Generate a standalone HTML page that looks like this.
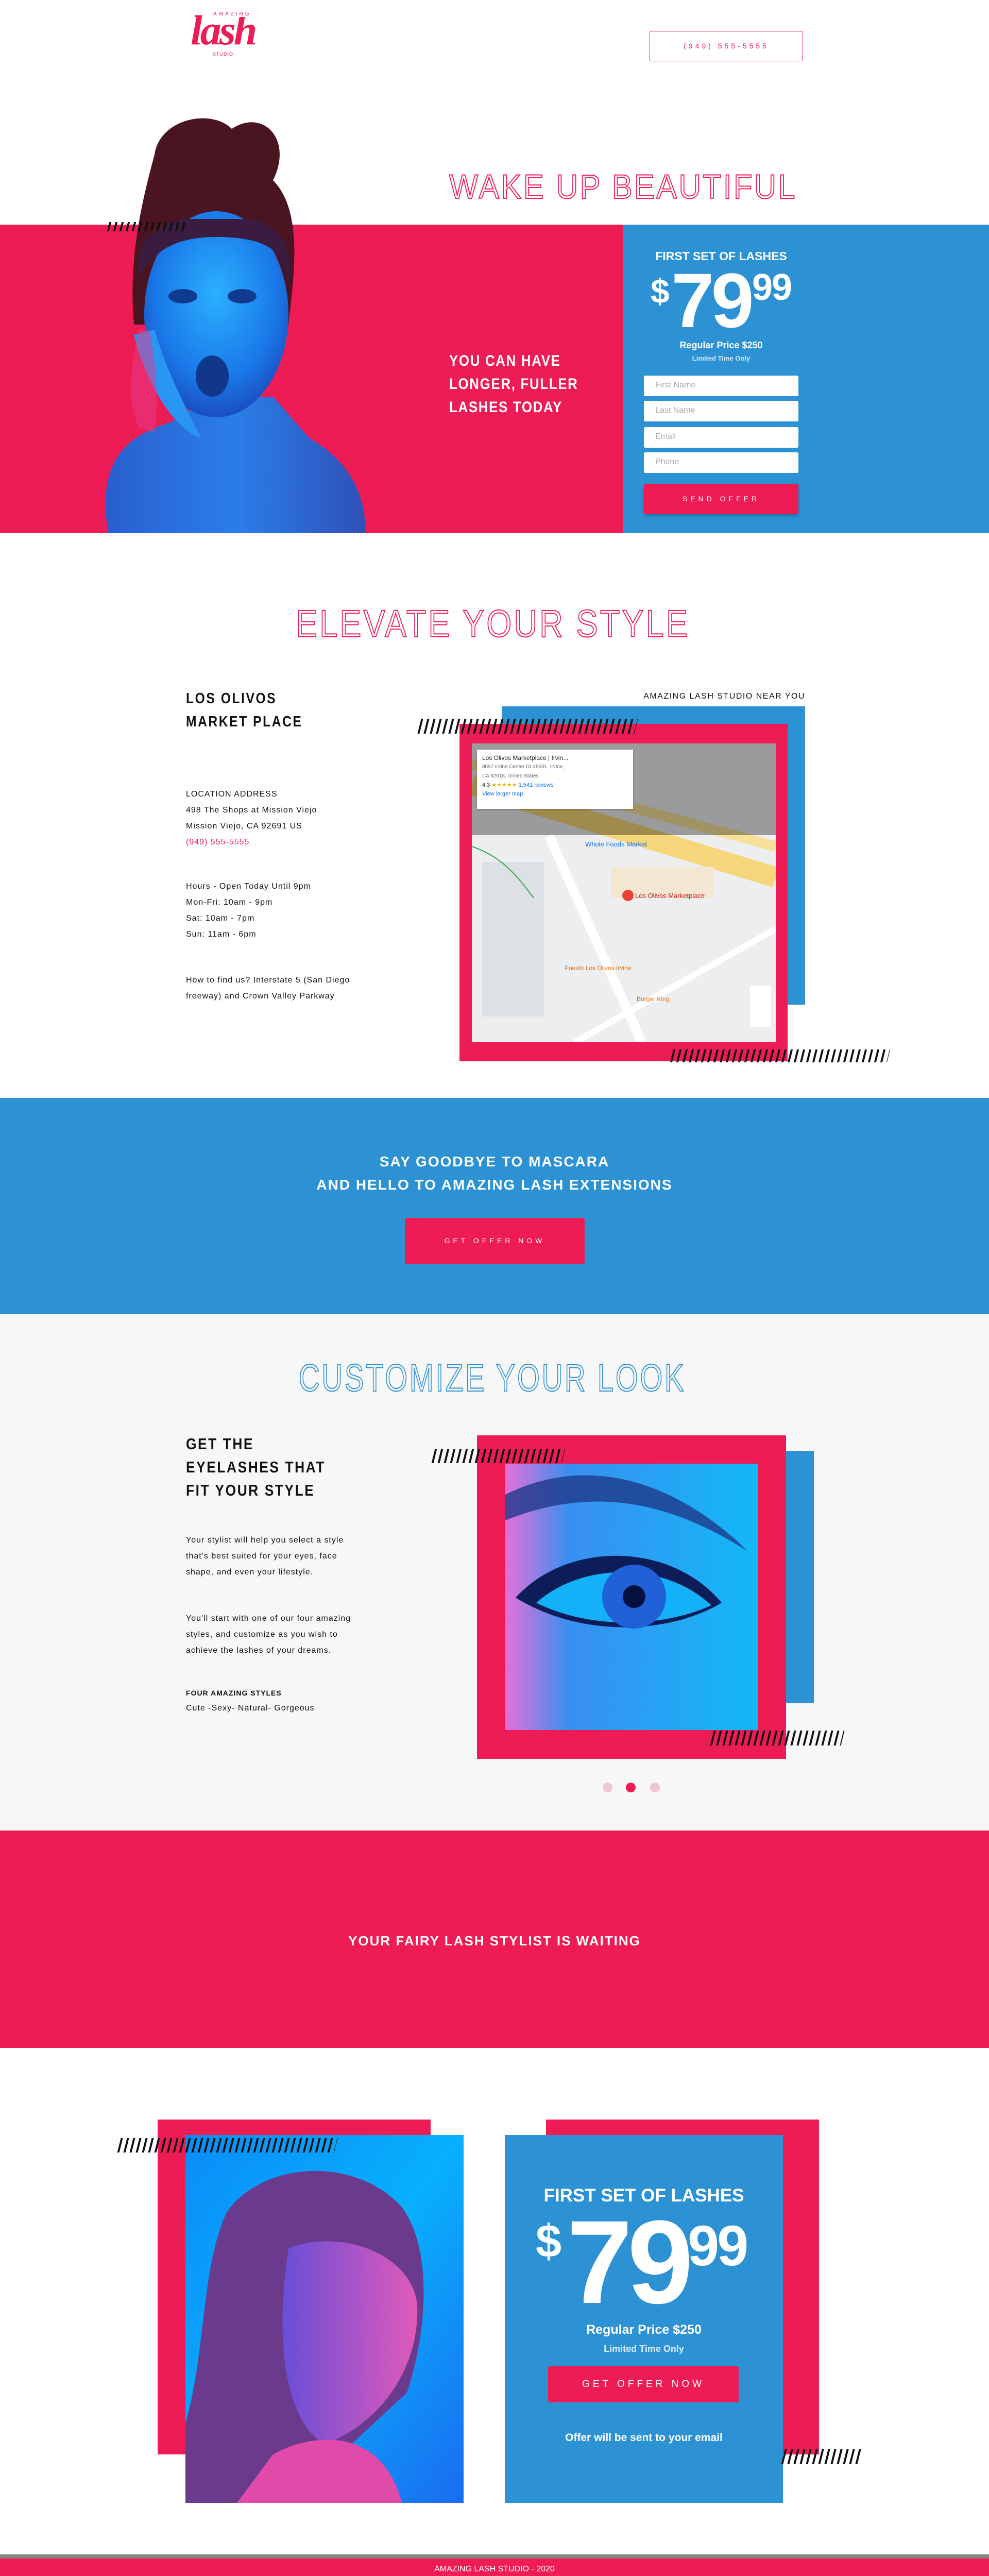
<!DOCTYPE html>
<html style="overflow:hidden;height:5008px"><head><meta charset="utf-8"><style>
*{margin:0;padding:0;box-sizing:border-box}
body{width:1920px;height:5008px;position:relative;background:#fff;font-family:"Liberation Sans",sans-serif;overflow:hidden}
.a{position:absolute}
.pk{background:#ed1c55}.bl{background:#2d92d3}
.stripes{position:absolute;background:repeating-linear-gradient(90deg,#111 0 4px,transparent 4px 12px);transform:skewX(-14deg)}
.outline{position:absolute;color:transparent;-webkit-text-stroke:2px #ed1c55;font-family:"Liberation Sans",sans-serif;font-weight:400;white-space:nowrap;transform-origin:0 0}
.wt{color:#fff;font-weight:700;white-space:nowrap}
.inp{position:absolute;left:1250px;width:300px;height:40px;background:#fff;border-radius:3px;color:#aaa;font-size:16px;padding:10px 0 0 22px}
.body{color:#111;font-size:16px;letter-spacing:1px;white-space:nowrap}
.cx{transform-origin:0 0}
</style></head><body>

<!-- header -->
<div class="a" style="left:370px;top:18px;font-family:'Liberation Serif',serif;font-style:italic;font-weight:700;font-size:82px;color:#ed1c55;letter-spacing:-4px;line-height:1">lash</div>
<div class="a" style="left:412px;top:22px;font-size:10px;letter-spacing:4px;color:#ed1c55;background:#fff;padding:0 2px">AMAZING</div>
<div class="a" style="left:413px;top:100px;font-size:9px;letter-spacing:1px;color:#ed1c55">STUDIO</div>
<div class="a" style="left:1261px;top:60px;width:298px;height:59px;border:1.5px solid #ed1c55;border-radius:3px;color:#ed1c55;font-size:14px;letter-spacing:5px;text-align:center;line-height:56px">(949) 555-5555</div>

<div class="outline" style="left:872px;top:324px;font-size:66px;letter-spacing:4px;transform:scaleX(.9)">WAKE UP BEAUTIFUL</div>

<!-- hero band -->
<div class="a pk" style="left:0;top:436px;width:1209px;height:599px"></div>
<div class="a bl" style="left:1209px;top:436px;width:711px;height:599px"></div>
<svg class="a" style="left:150px;top:210px" width="590" height="825" viewBox="0 0 590 825">
<defs>
<radialGradient id="f1" cx="50%" cy="40%" r="60%"><stop offset="0" stop-color="#2ab0ff"/><stop offset="0.7" stop-color="#1a78e8"/><stop offset="1" stop-color="#1a4fc0"/></radialGradient>
<linearGradient id="b1" x1="0" x2="1"><stop offset="0" stop-color="#2a5ed0"/><stop offset="0.5" stop-color="#2a7ee8"/><stop offset="1" stop-color="#3050b8"/></linearGradient>
</defs>
<path d="M60 825 C40 700 80 640 180 610 L260 560 L380 560 L450 640 C520 680 560 740 560 825 Z" fill="url(#b1)"/>
<path d="M150 90 C160 20 260 0 300 40 C360 0 420 60 380 140 C440 200 420 330 410 420 L110 420 C100 300 120 200 150 90Z" fill="#4a1420"/>
<ellipse cx="270" cy="400" rx="140" ry="200" fill="url(#f1)"/>
<path d="M120 330 C110 260 150 230 200 215 L340 215 C400 230 420 280 410 340 L400 300 C380 260 330 250 270 250 C200 250 150 270 120 330Z" fill="#3a1c40"/>
<ellipse cx="205" cy="365" rx="28" ry="14" fill="#0e3a90"/><ellipse cx="320" cy="365" rx="28" ry="14" fill="#0e3a90"/>
<ellipse cx="262" cy="520" rx="32" ry="40" fill="#10378a"/>
<path d="M110 440 C130 520 180 620 240 640 C200 560 170 500 150 430 Z" fill="#2a96f4"/>
<path d="M120 430 C110 470 90 560 120 620 L150 630 C160 560 150 480 140 430Z" fill="#e63a8a" opacity="0.5"/>
</svg>
<div class="stripes" style="left:210px;top:431px;width:148px;height:18px"></div>

<div class="a wt cx" style="left:872px;top:678px;font-size:30px;letter-spacing:2px;line-height:45px;transform:scaleX(.86)">YOU CAN HAVE<br>LONGER, FULLER<br>LASHES TODAY</div>

<div class="a wt" style="left:1250px;width:300px;top:484px;text-align:center;font-size:23px">FIRST SET OF LASHES</div>
<div class="a wt" style="left:1263px;top:527px;font-size:66px">$</div>
<div class="a wt" style="left:1303px;top:508px;font-size:150px;line-height:150px;letter-spacing:-6px">79</div>
<div class="a wt" style="left:1460px;top:522px;font-size:72px;line-height:72px;letter-spacing:-2px">99</div>
<div class="a wt" style="left:1250px;width:300px;top:660px;text-align:center;font-size:18px">Regular Price $250</div>
<div class="a" style="left:1250px;width:300px;top:688px;text-align:center;font-size:13px;font-weight:700;color:#d4e8f6">Limited Time Only</div>
<div class="inp" style="top:729px">First Name</div>
<div class="inp" style="top:778px">Last Name</div>
<div class="inp" style="top:829px">Email</div>
<div class="inp" style="top:878px">Phone</div>
<div class="a pk" style="left:1250px;top:939px;width:300px;height:59px;border-radius:3px;box-shadow:0 3px 6px rgba(0,0,0,.25);color:#fff;font-size:14px;letter-spacing:6px;text-align:center;line-height:59px">SEND OFFER</div>

<!-- elevate -->
<div class="outline" style="left:574px;top:1168px;font-size:74px;letter-spacing:5px;transform:scaleX(.85)">ELEVATE YOUR STYLE</div>
<div class="a body cx" style="left:361px;top:1334px;font-size:29px;font-weight:700;letter-spacing:3px;line-height:45px;transform:scaleX(.85)">LOS OLIVOS<br>MARKET PLACE</div>
<div class="a body" style="left:1563px;top:1343px;transform:translateX(-100%);font-size:16px;letter-spacing:1.5px">AMAZING LASH STUDIO NEAR YOU</div>
<div class="a body" style="left:361px;top:1526px;line-height:31px">LOCATION ADDRESS<br>498 The Shops at Mission Viejo<br>Mission Viejo, CA 92691 US<br><span style="color:#ed1c55">(949) 555-5555</span></div>
<div class="a body" style="left:361px;top:1705px;line-height:31px">Hours - Open Today Until 9pm<br>Mon-Fri: 10am - 9pm<br>Sat: 10am - 7pm<br>Sun: 11am - 6pm</div>
<div class="a body" style="left:361px;top:1887px;line-height:31px">How to find us? Interstate 5 (San Diego<br>freeway) and Crown Valley Parkway</div>

<div class="a bl" style="left:974px;top:1371px;width:589px;height:579px"></div>
<div class="a pk" style="left:892px;top:1405px;width:637px;height:655px"></div>
<div class="a" style="left:916px;top:1443px;width:590px;height:580px;background:#eceef0;overflow:hidden">
<svg width="590" height="580" style="position:absolute;left:0;top:0">
<path d="M0 80 L590 260" stroke="#f6d67a" stroke-width="40" fill="none"/>
<path d="M0 40 L590 200" stroke="#f6e09a" stroke-width="20" fill="none"/>
<path d="M150 180 L330 580" stroke="#fff" stroke-width="18" fill="none"/>
<path d="M200 580 L590 360" stroke="#fff" stroke-width="12" fill="none"/>
<rect x="20" y="230" width="120" height="300" fill="#dde0e4"/>
<rect x="270" y="240" width="200" height="60" fill="#f3e6d2"/>
<path d="M0 200 C60 220 90 260 120 300" stroke="#34a853" stroke-width="2" fill="none"/>
<circle cx="303" cy="295" r="11" fill="#ea4335"/>
<text x="317" y="300" fill="#c5221f" font-size="13" font-family="Liberation Sans,sans-serif">Los Olivos Marketplace</text>
<text x="220" y="200" fill="#1a73e8" font-size="13" font-family="Liberation Sans,sans-serif">Whole Foods Market</text>
<text x="180" y="440" fill="#e8710a" font-size="12" font-family="Liberation Sans,sans-serif">Puesto Los Olivos Irvine</text>
<text x="320" y="500" fill="#e8710a" font-size="12" font-family="Liberation Sans,sans-serif">Burger King</text>
<rect x="540" y="470" width="40" height="80" fill="#fff"/>
</svg>
<div class="a" style="left:0;top:0;width:590px;height:178px;background:rgba(0,0,0,.35)"></div>
<div class="a" style="left:10px;top:12px;width:303px;height:115px;background:#fff;box-shadow:0 1px 3px rgba(0,0,0,.3);padding:8px 10px;font-size:12px;color:#222;line-height:16px">Los Olivos Marketplace | Irvin...<br><span style="color:#666;font-size:10px">8697 Irvine Center Dr #8501, Irvine,<br>CA 92618, United States</span><br><span style="font-size:11px">4.3 <span style="color:#f4b400">★★★★★</span> <span style="color:#1a73e8">1,541 reviews</span></span><br><span style="color:#1a73e8;font-size:11px">View larger map</span></div>
</div>
<div class="stripes" style="left:814px;top:1395px;width:421px;height:29px"></div>
<div class="stripes" style="left:1304px;top:2037px;width:421px;height:25px"></div>

<!-- blue cta -->
<div class="a bl" style="left:0;top:2131px;width:1920px;height:419px"></div>
<div class="a wt" style="left:0;width:1920px;top:2232px;text-align:center;font-size:28px;letter-spacing:2px;line-height:45px">SAY GOODBYE TO MASCARA<br>AND HELLO TO AMAZING LASH EXTENSIONS</div>
<div class="a pk" style="left:786px;top:2364px;width:349px;height:89px;border-radius:3px;color:#fff;font-size:14px;letter-spacing:6px;text-align:center;line-height:89px">GET OFFER NOW</div>

<!-- customize -->
<div class="a" style="left:0;top:2550px;width:1920px;height:1003px;background:#f7f7f7"></div>
<div class="outline" style="left:580px;top:2632px;font-size:74px;letter-spacing:5px;transform:scaleX(.76);-webkit-text-stroke-color:#2d92d3">CUSTOMIZE YOUR LOOK</div>
<div class="a body cx" style="left:361px;top:2780px;font-size:31px;font-weight:700;letter-spacing:3px;line-height:45px;transform:scaleX(.85)">GET THE<br>EYELASHES THAT<br>FIT YOUR STYLE</div>
<div class="a body" style="left:361px;top:2974px;line-height:31px">Your stylist will help you select a style<br>that's best suited for your eyes, face<br>shape, and even your lifestyle.</div>
<div class="a body" style="left:361px;top:3126px;line-height:31px">You'll start with one of our four amazing<br>styles, and customize as you wish to<br>achieve the lashes of your dreams.</div>
<div class="a body" style="left:361px;top:3278px;font-weight:700;font-size:14px">FOUR AMAZING STYLES</div>
<div class="a body" style="left:361px;top:3307px">Cute -Sexy- Natural- Gorgeous</div>
<div class="a bl" style="left:1526px;top:2816px;width:54px;height:490px"></div>
<div class="a pk" style="left:926px;top:2786px;width:600px;height:628px"></div>
<svg class="a" style="left:981px;top:2841px" width="490" height="517" viewBox="0 0 490 517">
<defs><linearGradient id="e1" x1="0" x2="1"><stop offset="0" stop-color="#e66fd8"/><stop offset="0.25" stop-color="#3a8ff0"/><stop offset="1" stop-color="#12b8f8"/></linearGradient></defs>
<rect width="490" height="517" fill="url(#e1)"/>
<path d="M0 60 C120 0 280 0 450 150 L470 170 C300 60 150 50 0 110Z" fill="#1e3a8a" opacity="0.8"/>
<path d="M20 260 C120 150 320 150 420 270 C320 330 150 340 20 260Z" fill="#0c1d5a"/>
<path d="M60 270 C150 190 310 190 400 275 C300 320 160 320 60 270Z" fill="#14b0f8"/>
<circle cx="250" cy="258" r="62" fill="#2060d8"/>
<circle cx="250" cy="258" r="22" fill="#061040"/>
</svg>
<div class="stripes" style="left:841px;top:2812px;width:253px;height:28px"></div>
<div class="stripes" style="left:1382px;top:3359px;width:254px;height:29px"></div>
<div class="a" style="left:1170px;top:3460px;width:19px;height:19px;border-radius:50%;background:#f5c3d3"></div>
<div class="a" style="left:1215px;top:3460px;width:19px;height:19px;border-radius:50%;background:#ed1c55"></div>
<div class="a" style="left:1262px;top:3460px;width:19px;height:19px;border-radius:50%;background:#f5c3d3"></div>

<!-- pink band -->
<div class="a pk" style="left:0;top:3553px;width:1920px;height:422px"></div>
<div class="a wt" style="left:0;width:1920px;top:3752px;text-align:center;font-size:26px;letter-spacing:2px">YOUR FAIRY LASH STYLIST IS WAITING</div>

<!-- offer -->
<div class="a pk" style="left:306px;top:4114px;width:530px;height:650px"></div>
<svg class="a" style="left:360px;top:4144px" width="540" height="714" viewBox="0 0 540 714">
<defs><linearGradient id="g2" x1="0" x2="1" y1="0" y2="1"><stop offset="0" stop-color="#0a8cf8"/><stop offset="0.5" stop-color="#08b0fc"/><stop offset="1" stop-color="#1a6cf0"/></linearGradient>
<linearGradient id="s2" x1="0" x2="1"><stop offset="0" stop-color="#6a4ed8"/><stop offset="1" stop-color="#e05ab8"/></linearGradient></defs>
<rect width="540" height="714" fill="url(#g2)"/>
<path d="M80 150 C150 50 330 40 420 140 C480 220 470 380 430 500 L200 714 L0 714 L0 560 C40 420 30 260 80 150Z" fill="#6a3a8c"/>
<path d="M200 220 C300 180 440 230 450 330 C455 450 380 560 270 600 C200 560 170 420 200 220Z" fill="url(#s2)"/>
<path d="M170 620 C240 580 380 560 420 714 L100 714 Z" fill="#e04aa8"/>
</svg>
<div class="stripes" style="left:231px;top:4150px;width:421px;height:28px"></div>
<div class="a pk" style="left:1060px;top:4114px;width:530px;height:650px"></div>
<div class="a bl" style="left:980px;top:4144px;width:540px;height:714px"></div>
<div class="stripes" style="left:1520px;top:4754px;width:153px;height:29px"></div>
<div class="a wt" style="left:980px;width:540px;top:4242px;text-align:center;font-size:35px">FIRST SET OF LASHES</div>
<div class="a wt" style="left:1040px;top:4300px;font-size:90px">$</div>
<div class="a wt" style="left:1100px;top:4276px;font-size:230px;line-height:230px;letter-spacing:-10px">79</div>
<div class="a wt" style="left:1335px;top:4305px;font-size:110px;line-height:110px;letter-spacing:-4px">99</div>
<div class="a wt" style="left:980px;width:540px;top:4508px;text-align:center;font-size:25px">Regular Price $250</div>
<div class="a" style="left:980px;width:540px;top:4549px;text-align:center;font-size:18px;font-weight:700;color:#dcecf8">Limited Time Only</div>
<div class="a pk" style="left:1064px;top:4593px;width:370px;height:70px;border-radius:3px;color:#fff;font-size:19px;letter-spacing:6px;text-align:center;line-height:70px">GET OFFER NOW</div>
<div class="a wt" style="left:980px;width:540px;top:4720px;text-align:center;font-size:21px">Offer will be sent to your email</div>

<!-- footer -->
<div class="a" style="left:0;top:4958px;width:1920px;height:8px;background:#858585"></div>
<div class="a pk" style="left:0;top:4966px;width:1920px;height:42px;color:#fff;font-size:16px;text-align:center;line-height:42px">AMAZING LASH STUDIO - 2020</div>
</body></html>
